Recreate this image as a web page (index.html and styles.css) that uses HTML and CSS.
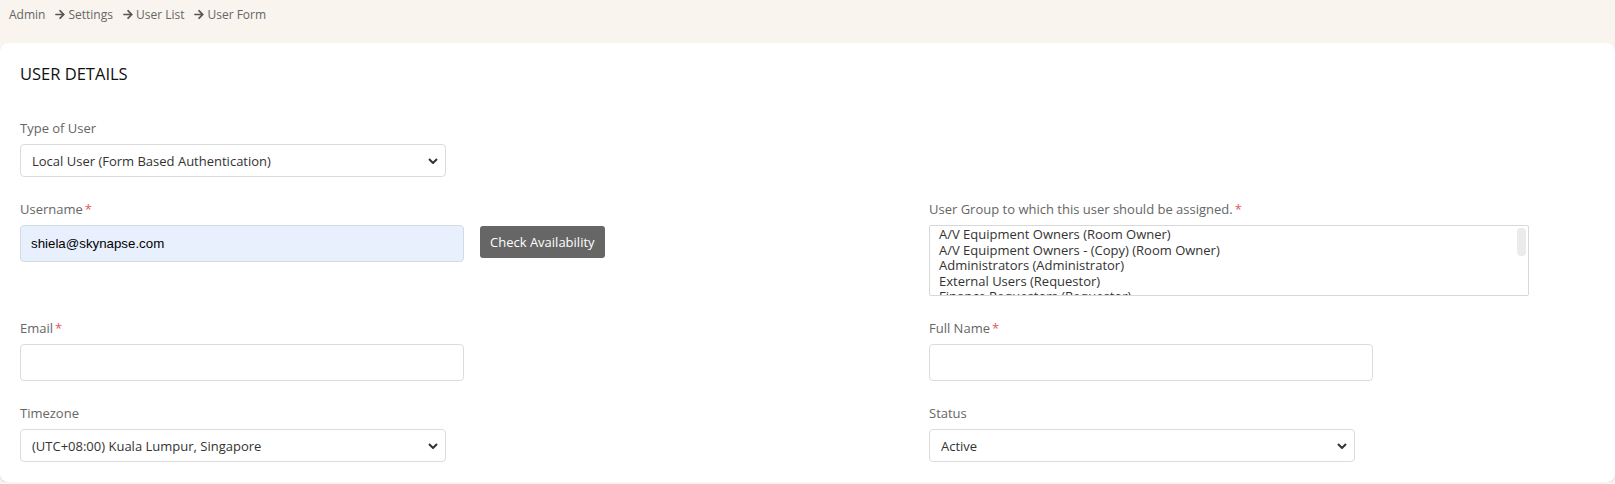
FILE: index.html
```html
<!DOCTYPE html>
<html lang="en">
<head>
    <meta charset="UTF-8">
    <meta name="viewport" content="width=device-width, initial-scale=1.0">
    <title>User Form</title>
    <link rel="stylesheet" href="styles.css">
</head>
<body>
    <div class="breadcrumb">
        <span>Admin</span>
        <span class="crumb-sep"><svg viewBox="0 0 448 512" width="10" height="11"><path d="M190.5 66.9l22.2-22.2c9.4-9.4 24.6-9.4 33.9 0L441 239c9.4 9.4 9.4 24.6 0 33.9L246.6 467.3c-9.4 9.4-24.6 9.4-33.9 0l-22.2-22.2c-9.5-9.5-9.3-25 .4-34.3L311.4 296H24c-13.3 0-24-10.7-24-24v-32c0-13.3 10.7-24 24-24h287.4L190.9 101.2c-9.8-9.3-10-24.8-.4-34.3z"/></svg></span>
        <span>Settings</span>
        <span class="crumb-sep"><svg viewBox="0 0 448 512" width="10" height="11"><path d="M190.5 66.9l22.2-22.2c9.4-9.4 24.6-9.4 33.9 0L441 239c9.4 9.4 9.4 24.6 0 33.9L246.6 467.3c-9.4 9.4-24.6 9.4-33.9 0l-22.2-22.2c-9.5-9.5-9.3-25 .4-34.3L311.4 296H24c-13.3 0-24-10.7-24-24v-32c0-13.3 10.7-24 24-24h287.4L190.9 101.2c-9.8-9.3-10-24.8-.4-34.3z"/></svg></span>
        <span>User List</span>
        <span class="crumb-sep"><svg viewBox="0 0 448 512" width="10" height="11"><path d="M190.5 66.9l22.2-22.2c9.4-9.4 24.6-9.4 33.9 0L441 239c9.4 9.4 9.4 24.6 0 33.9L246.6 467.3c-9.4 9.4-24.6 9.4-33.9 0l-22.2-22.2c-9.5-9.5-9.3-25 .4-34.3L311.4 296H24c-13.3 0-24-10.7-24-24v-32c0-13.3 10.7-24 24-24h287.4L190.9 101.2c-9.8-9.3-10-24.8-.4-34.3z"/></svg></span>
        <span>User Form</span>
    </div>

    <div class="card">
        <h2 class="card-title">USER DETAILS</h2>

        <div class="form-group">
            <label class="form-label">Type of User</label>
            <div class="select-wrap">
                <select class="form-select">
                    <option>Local User (Form Based Authentication)</option>
                </select>
                <svg class="chevron" viewBox="0 0 10 6" width="10" height="6"><path d="M1 1l4 4 4-4" fill="none" stroke="#333" stroke-width="2"/></svg>
            </div>
        </div>

        <div class="form-grid">
            <div class="form-group">
                <label class="form-label">Username<span class="req">*</span></label>
                <div class="inline-row">
                    <input type="text" class="form-input autofill" value="shiela@skynapse.com">
                    <button class="btn-check">Check Availability</button>
                </div>
            </div>
            <div class="form-group">
                <label class="form-label">User Group to which this user should be assigned.<span class="req">*</span></label>
                <div class="listbox">
                    <div class="list-option">A/V Equipment Owners (Room Owner)</div>
                    <div class="list-option">A/V Equipment Owners - (Copy) (Room Owner)</div>
                    <div class="list-option">Administrators (Administrator)</div>
                    <div class="list-option">External Users (Requestor)</div>
                    <div class="list-option">Finance Requestors (Requestor)</div>
                    <span class="scroll-thumb"></span>
                </div>
            </div>

            <div class="form-group">
                <label class="form-label">Email<span class="req">*</span></label>
                <input type="text" class="form-input">
            </div>
            <div class="form-group">
                <label class="form-label">Full Name<span class="req">*</span></label>
                <input type="text" class="form-input">
            </div>

            <div class="form-group">
                <label class="form-label">Timezone</label>
                <div class="select-wrap">
                    <select class="form-select">
                        <option>(UTC+08:00) Kuala Lumpur, Singapore</option>
                    </select>
                    <svg class="chevron" viewBox="0 0 10 6" width="10" height="6"><path d="M1 1l4 4 4-4" fill="none" stroke="#333" stroke-width="2"/></svg>
                </div>
            </div>
            <div class="form-group">
                <label class="form-label">Status</label>
                <div class="select-wrap">
                    <select class="form-select">
                        <option>Active</option>
                    </select>
                    <svg class="chevron" viewBox="0 0 10 6" width="10" height="6"><path d="M1 1l4 4 4-4" fill="none" stroke="#333" stroke-width="2"/></svg>
                </div>
            </div>
        </div>
    </div>
</body>
</html>
```

FILE: styles.css
```css
body {
    margin: 0;
    background: #f9f4ee;
    font-family: "Open Sans", "Noto Sans", sans-serif;
    font-size: 13px;
    color: #555;
}
.breadcrumb {
    display: flex;
    align-items: center;
    height: 43px;
    padding: 0 0 14px 9px;
    box-sizing: border-box;
    color: #666;
    font-size: 12px;
}
.crumb-sep {
    display: inline-flex;
    margin: 0 3px 0 10px;
    fill: #555;
}
.card {
    background: #fff;
    border-radius: 8px;
    box-shadow: 0 1px 2px rgba(0,0,0,0.12);
    padding: 20px 20px 0;
    height: 439px;
    box-sizing: border-box;
}
.card-title {
    margin: 0 0 33px;
    font-size: 16.5px;
    font-weight: 500;
    line-height: 22px;
    color: #111;
}
.form-group {
    margin-bottom: 22px;
}
.form-label {
    display: block;
    line-height: 20px;
    margin-bottom: 6px;
    color: #666;
}
.req {
    color: #e05a5a;
    margin-left: 2px;
}
.form-grid {
    display: grid;
    grid-template-columns: 909px 1fr;
    align-items: start;
}
.form-grid .form-group:nth-last-child(-n+2) {
    margin-bottom: 0;
}
.select-wrap {
    position: relative;
    width: 426px;
}
.form-select {
    appearance: none;
    -webkit-appearance: none;
    display: block;
    width: 100%;
    height: 33px;
    padding: 0 30px 0 11px;
    border: 1px solid #dcdcdc;
    border-radius: 4px;
    background: #fff;
    font-family: inherit;
    font-size: 13px;
    color: #333;
}
.chevron {
    position: absolute;
    right: 8px;
    top: 14px;
}
.form-input {
    display: block;
    width: 444px;
    height: 37px;
    padding: 0 10px;
    box-sizing: border-box;
    border: 1px solid #dcdcdc;
    border-radius: 4px;
    background: #fff;
    font-family: "Liberation Sans", Arial, sans-serif;
    font-size: 13.3px;
    color: #000;
}
.form-input.autofill {
    background: #e8f0fe;
    border-color: #d3dbe8;
}
.inline-row {
    display: flex;
    align-items: flex-start;
    gap: 16px;
}
.btn-check {
    margin-top: 1px;
    height: 32px;
    padding: 0 10px;
    border: none;
    border-radius: 3px;
    background: #666;
    color: #fff;
    font-family: inherit;
    font-size: 13px;
}
.listbox {
    position: relative;
    width: 600px;
    height: 71px;
    box-sizing: border-box;
    border: 1px solid #d8d8d8;
    border-radius: 2px;
    padding: 1px 9px 0;
    overflow: hidden;
    color: #333;
}
.list-option {
    line-height: 15.5px;
    white-space: nowrap;
}
.scroll-thumb {
    position: absolute;
    right: 2px;
    top: 2px;
    width: 9px;
    height: 28px;
    border-radius: 4px;
    background: #ebebeb;
}
```
